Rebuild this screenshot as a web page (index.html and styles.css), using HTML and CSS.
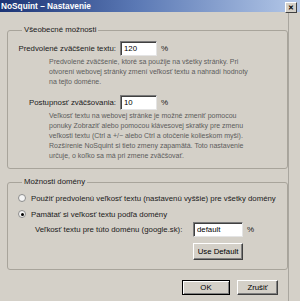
FILE: index.html
```html
<!DOCTYPE html>
<html lang="sk">
<head>
    <meta charset="UTF-8">
    <title>NoSquint – Nastavenie</title>
    <link rel="stylesheet" href="styles.css">
</head>
<body>
    <div class="titlebar">
        <span class="title">NoSquint – Nastavenie</span>
        <span class="close-btn">&#x2715;</span>
    </div>

    <div class="dialog">
        <fieldset class="group group-general">
            <legend>Všeobecné možnosti</legend>

            <div class="field-row">
                <label for="default-zoom">Predvolené zväčšenie textu:</label>
                <input type="text" id="default-zoom" class="num-input" value="120">
                <span class="unit">%</span>
            </div>
            <p class="desc">Predvolené zväčšenie, ktoré sa použije na všetky stránky. Pri<br>otvorení webovej stránky zmení veľkosť textu a nahradí hodnoty<br>na tejto doméne.</p>

            <div class="field-row step-row">
                <label for="zoom-step">Postupnosť zväčšovania:</label>
                <input type="text" id="zoom-step" class="num-input" value="10">
                <span class="unit">%</span>
            </div>
            <p class="desc">Veľkosť textu na webovej stránke je možné zmeniť pomocou<br>ponuky Zobraziť alebo pomocou klávesovej skratky pre zmenu<br>veľkosti textu (Ctrl a +/− alebo Ctrl a otočenie kolieskom myši).<br>Rozšírenie NoSquint si tieto zmeny zapamätá. Toto nastavenie<br>určuje, o koľko sa má pri zmene zväčšovať.</p>
        </fieldset>

        <fieldset class="group group-domain">
            <legend>Možnosti domény</legend>

            <div class="radio-row">
                <span class="radio"></span>
                <span>Použiť predvolenú veľkosť textu (nastavenú vyššie) pre všetky domény</span>
            </div>
            <div class="radio-row">
                <span class="radio checked"></span>
                <span>Pamätať si veľkosť textu podľa domény</span>
            </div>

            <div class="site-row">
                <label for="site-zoom">Veľkosť textu pre túto doménu (google.sk):</label>
                <input type="text" id="site-zoom" class="site-input" value="default">
                <span class="unit">%</span>
            </div>
            <button class="btn use-default">Use Default</button>
        </fieldset>

        <div class="buttons">
            <button class="btn btn-ok">OK</button>
            <button class="btn btn-cancel">Zrušiť</button>
        </div>
    </div>
</body>
</html>
```

FILE: styles.css
```css
body {
    margin: 0;
    width: 300px;
    height: 301px;
    overflow: hidden;
    background-color: #d4d0c8;
    font-family: "Liberation Sans", Arial, sans-serif;
    font-size: 7.8px;
    color: #1a1a1a;
}

.titlebar {
    height: 12px;
    display: flex;
    align-items: center;
    justify-content: space-between;
    padding: 0 3px 0 1px;
    background: linear-gradient(to right, #1c3475 0%, #5a78b4 45%, #b4c8e8 100%);
}

.title {
    color: #fff;
    font-weight: bold;
    font-size: 8.3px;
}

.close-btn {
    width: 10px;
    height: 9px;
    margin-top: 2px;
    background-color: #d4d0c8;
    border: 1px solid;
    border-color: #fff #404040 #404040 #fff;
    font-size: 7px;
    font-weight: bold;
    line-height: 9px;
    text-align: center;
    color: #000;
}

.dialog {
    width: 289px;
    height: 289px;
    border-right: 1px solid #a9a69f;
    box-sizing: border-box;
    display: flex;
    flex-direction: column;
}

.group {
    width: 281px;
    box-sizing: border-box;
    margin: 0 0 0 7px;
    border: 1px solid #a8a49b;
    border-radius: 3px;
    padding: 6px 4px 7px 10px;
}

.group legend {
    padding: 0 2px;
    margin-left: 4px;
    line-height: 10px;
    color: #1a1a1a;
}

.group-general {
    margin-top: 13px;
}

.group-domain {
    margin-top: 8px;
    padding-bottom: 9px;
}

.field-row {
    display: grid;
    grid-template-columns: 98px 37px auto;
    column-gap: 4px;
    align-items: center;
    height: 15px;
}

.field-row label {
    text-align: right;
    white-space: nowrap;
}

.step-row {
    margin-top: 8px;
}

input {
    font-family: inherit;
    font-size: 7.8px;
    color: #000;
    background-color: #fff;
    border: 1px solid;
    border-color: #7a7a7a #e4e4e4 #e4e4e4 #7a7a7a;
    box-shadow: inset 1px 1px 0 #404040;
    padding: 0 0 0 3px;
    margin: 0;
    height: 15px;
    box-sizing: border-box;
    outline: none;
}

.unit {
    font-size: 8px;
}

.desc {
    margin: 1px 0 0 31px;
    font-size: 7px;
    line-height: 10px;
    color: #5c5c5c;
    white-space: nowrap;
}

.radio-row {
    display: flex;
    align-items: center;
    gap: 5px;
    height: 10px;
    white-space: nowrap;
}

.radio-row + .radio-row {
    margin-top: 6px;
}

.radio {
    width: 8px;
    height: 8px;
    box-sizing: border-box;
    border-radius: 50%;
    border: 1px solid #8c8c8c;
    background-color: #f4f4f4;
    display: flex;
    align-items: center;
    justify-content: center;
}

.radio.checked::after {
    content: "";
    width: 3px;
    height: 3px;
    border-radius: 50%;
    background-color: #000;
}

.site-row {
    display: flex;
    align-items: center;
    margin: 3px 0 0 17px;
    height: 15px;
    white-space: nowrap;
}

.site-row label {
    width: 158px;
}

.site-input {
    width: 50px;
    margin-right: 4px;
}

.btn {
    font-family: inherit;
    font-size: 7.8px;
    color: #000;
    background-color: #d4d0c8;
    border: 1px solid;
    border-color: #fff #404040 #404040 #fff;
    box-shadow: inset -1px -1px 0 #808080;
    padding: 0;
    height: 16px;
    box-sizing: border-box;
    cursor: pointer;
}

.use-default {
    width: 50px;
    height: 17px;
    margin: 6px 0 0 175px;
    display: block;
}

.buttons {
    display: flex;
    justify-content: flex-end;
    gap: 7px;
    padding-right: 10px;
    margin-top: 10px;
}

.btn-ok {
    width: 48px;
    height: 15px;
    border-color: #000;
    box-shadow: inset 1px 1px 0 #fff, inset -1px -1px 0 #808080;
}

.btn-cancel {
    width: 41px;
    height: 15px;
}
```
